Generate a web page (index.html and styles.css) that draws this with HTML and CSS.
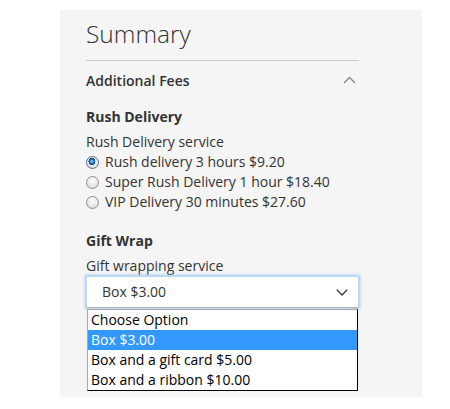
FILE: index.html
```html
<!DOCTYPE html>
<html lang="en">
<head>
<meta charset="utf-8">
<title>Summary</title>
<link rel="stylesheet" href="styles.css">
</head>
<body>
<div class="panel">
  <h2 class="title">Summary</h2>
  <div class="fees">
    <div class="fees-head">
      <span class="fees-title">Additional Fees</span>
      <svg class="chev-up" width="13" height="8" viewBox="0 0 13 8"><path d="M1 7 L6.5 1.5 L12 7" fill="none" stroke="#858585" stroke-width="1.3"/></svg>
    </div>
    <div class="group">
      <div class="group-title">Rush Delivery</div>
      <div class="label">Rush Delivery service</div>
      <label class="radio"><input type="radio" name="rush" checked><span>Rush delivery 3 hours $9.20</span></label>
      <label class="radio"><input type="radio" name="rush"><span>Super Rush Delivery 1 hour $18.40</span></label>
      <label class="radio"><input type="radio" name="rush"><span>VIP Delivery 30 minutes $27.60</span></label>
    </div>
    <div class="group group-gift">
      <div class="group-title">Gift Wrap</div>
      <div class="label">Gift wrapping service</div>
      <div class="select-wrap">
        <div class="select">
          <span>Box $3.00</span>
          <svg class="chev-down" width="12" height="7" viewBox="0 0 12 7"><path d="M0.8 0.8 L6 6 L11.2 0.8" fill="none" stroke="#333" stroke-width="1.3"/></svg>
        </div>
        <ul class="dropdown">
          <li>Choose Option</li>
          <li class="active">Box $3.00</li>
          <li>Box and a gift card $5.00</li>
          <li>Box and a ribbon $10.00</li>
        </ul>
      </div>
    </div>
  </div>
</div>
</body>
</html>
```
FILE: styles.css
```css
html, body {
  margin: 0;
  padding: 0;
  background: #fff;
}
body {
  font-family: "Open Sans", "Liberation Sans", sans-serif;
  font-size: 14px;
  line-height: 20px;
  color: #333;
}
.panel {
  margin: 10px 0 0 60px;
  width: 362px;
  height: 387px;
  box-sizing: border-box;
  background: #f5f5f5;
  padding: 8px 63px 0 26px;
}
.title {
  margin: 0 0 10px;
  font-size: 24.5px;
  line-height: 32px;
  font-weight: 300;
}
.fees {
  border-top: 1px solid #ccc;
  border-bottom: 1px solid #ccc;
  padding: 10px 0 0;
  height: 322px;
  box-sizing: border-box;
}
.fees-head {
  display: flex;
  justify-content: space-between;
  align-items: center;
  height: 20px;
  padding-right: 3px;
}
.fees-title {
  font-weight: 600;
}
.chev-up {
  display: block;
  margin-top: -2px;
}
.group {
  margin-top: 16px;
  display: flex;
  flex-direction: column;
}
.group-gift {
  margin-top: 19px;
}
.group-title {
  font-weight: 700;
  margin-bottom: 5px;
}
.radio {
  display: flex;
  align-items: center;
  height: 20px;
}
.radio input {
  -webkit-appearance: none;
  appearance: none;
  width: 13px;
  height: 13px;
  margin: 0 6px 0 0;
  border-radius: 50%;
  border: 1px solid #8f8f8f;
  background: radial-gradient(circle at 50% 35%, #fdfdfd 0%, #e6e6e6 60%, #cfcfcf 100%);
  box-sizing: border-box;
}
.radio input:checked {
  border-color: #5a6f8a;
  background:
    radial-gradient(circle at 45% 40%, #6fb7f2 0 1px, #1f6fc0 2px, #0c3f7a 3.4px, transparent 3.6px),
    radial-gradient(circle at 50% 35%, #fdfdfd 0%, #e6e6e6 60%, #cfcfcf 100%);
}
.select-wrap {
  position: relative;
}
.select {
  height: 32px;
  box-sizing: border-box;
  background: #fff;
  border: 1px solid #bcd7f2;
  border-bottom-color: #b4b4b4;
  box-shadow: 0 0 3px 1px #9fc8ef;
  display: flex;
  align-items: center;
  justify-content: space-between;
  padding: 0 10px 0 15px;
}
.chev-down {
  display: block;
}
.dropdown {
  position: absolute;
  top: 33px;
  left: 1px;
  right: 1px;
  margin: 0;
  padding: 0;
  list-style: none;
  background: #fff;
  border: 1px solid;
  border-color: #a9a9a9 #000 #000 #a9a9a9;
  color: #000;
}
.dropdown li {
  height: 20px;
  line-height: 20px;
  padding-left: 3px;
}
.dropdown li.active {
  background: #3399ff;
  color: #fff;
}
```
